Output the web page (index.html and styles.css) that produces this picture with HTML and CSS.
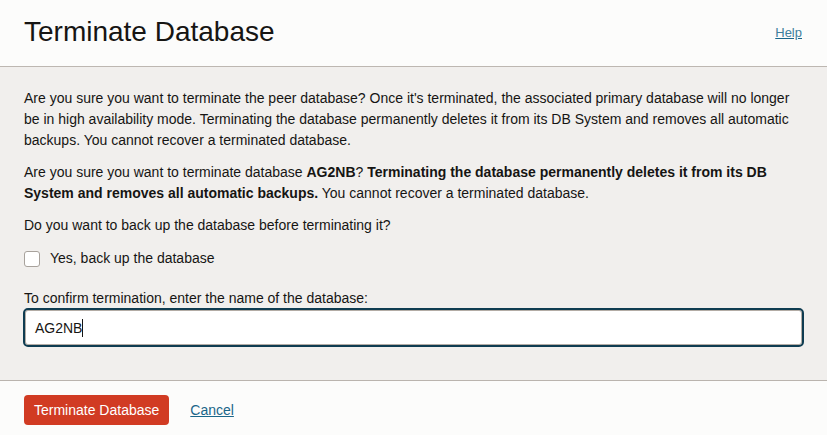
FILE: index.html
```html
<!DOCTYPE html>
<html lang="en">
<head>
<meta charset="utf-8">
<title>Terminate Database</title>
<link rel="stylesheet" href="styles.css">
</head>
<body>
<div class="dialog">
  <header class="dialog-header">
    <h1 class="dialog-title">Terminate Database</h1>
    <a class="help-link" href="#">Help</a>
  </header>
  <main class="dialog-body">
    <p class="para">Are you sure you want to terminate the peer database? Once it's terminated, the associated primary database will no longer be in high availability mode. Terminating the database permanently deletes it from its DB System and removes all automatic backups. You cannot recover a terminated database.</p>
    <p class="para">Are you sure you want to terminate database <strong>AG2NB</strong>? <strong>Terminating the database permanently deletes it from its DB System and removes all automatic backups.</strong> You cannot recover a terminated database.</p>
    <p class="para para-last">Do you want to back up the database before terminating it?</p>
    <label class="check-row">
      <span class="checkbox"></span>
      <span class="check-label">Yes, back up the database</span>
    </label>
    <div class="field-label">To confirm termination, enter the name of the database:</div>
    <div class="field"><span class="field-value">AG2NB</span><span class="caret"></span></div>
  </main>
  <footer class="dialog-footer">
    <button class="btn-danger" type="button">Terminate Database</button>
    <a class="cancel-link" href="#">Cancel</a>
  </footer>
</div>
</body>
</html>
```

FILE: styles.css
```css
* { box-sizing: border-box; }
html, body {
  margin: 0;
  padding: 0;
  height: 100%;
}
body {
  font-family: "Liberation Sans", Arial, sans-serif;
  color: #161513;
  background: #fcfcfb;
}
.dialog {
  width: 827px;
  height: 435px;
  display: flex;
  flex-direction: column;
}
.dialog-header {
  height: 67px;
  padding: 16px 25px 0 24px;
  display: flex;
  justify-content: space-between;
  align-items: flex-start;
  background: #fcfcfb;
  border-bottom: 1px solid #bdb7b1;
}
.dialog-title {
  margin: 0;
  font-size: 28px;
  line-height: 32px;
  font-weight: 400;
}
.help-link {
  margin-top: 9px;
  font-size: 13px;
  line-height: 16px;
  color: #3f7f9d;
  text-decoration-color: #1a6689;
}
.dialog-body {
  height: 313px;
  padding: 21px 24px 0 24px;
  background: #f1efed;
}
.para {
  margin: 0 0 11px 0;
  font-size: 14px;
  line-height: 21px;
}
.para-last {
  margin-bottom: 12px;
}
.para strong {
  font-weight: 700;
}
.check-row {
  display: flex;
  align-items: center;
  height: 21px;
  gap: 10px;
}
.checkbox {
  width: 16px;
  height: 16px;
  border: 1px solid #a8a29c;
  border-radius: 3px;
  background: #fff;
}
.check-label {
  font-size: 14px;
  line-height: 21px;
}
.field-label {
  margin-top: 19px;
  font-size: 14px;
  line-height: 20px;
}
.field {
  margin: 0 -1px;
  height: 39px;
  border: 2px solid #0f3c51;
  border-radius: 5px;
  box-shadow: inset 0 0 0 1px #b3aca5;
  background: #fff;
  padding: 0 10px;
  display: flex;
  align-items: center;
  font-size: 14px;
}
.caret {
  width: 1px;
  height: 18px;
  background: #161513;
}
.dialog-footer {
  flex: 1;
  padding: 14px 24px 0 24px;
  border-top: 1px solid #bab4ae;
  background: #fcfcfb;
  display: flex;
  align-items: flex-start;
  gap: 21px;
}
.btn-danger {
  height: 30px;
  padding: 0 10px;
  border: none;
  border-radius: 4px;
  background: #d13b23;
  color: #fff;
  font-family: "Liberation Sans", Arial, sans-serif;
  font-size: 14px;
  line-height: 30px;
}
.cancel-link {
  margin-top: 7px;
  font-size: 14px;
  line-height: 16px;
  color: #1a6689;
}
```
